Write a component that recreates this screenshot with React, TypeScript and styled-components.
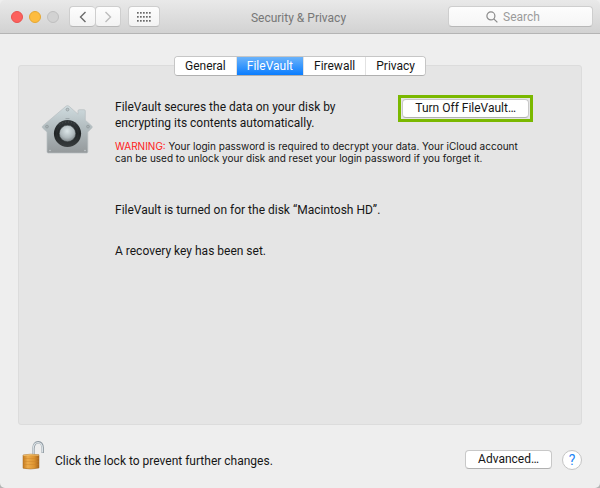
import React from "react";
import styled, { createGlobalStyle } from "styled-components";

const GlobalStyle = createGlobalStyle`
  * { box-sizing: border-box; }
  html, body { margin: 0; background: #b4b4b4; }
  body, button, input {
    font-family: Roboto, "Liberation Sans", sans-serif;
    font-size: 12px;
    color: #161616;
  }
  button { margin: 0; padding: 0; }
  p { margin: 0; }
`;

const Window = styled.div`
  min-height: 100vh;
  display: flex;
  flex-direction: column;
  background: #eeeeee;
  border-radius: 0 0 5px 5px;
`;

const TitleBar = styled.header`
  display: grid;
  grid-template-columns: 1fr auto 1fr;
  align-items: center;
  height: 34px;
  padding: 0 7px 0 11px;
  background: linear-gradient(#e9e9e9, #d2d2d2);
  border-bottom: 1px solid #b4b4b4;
  border-radius: 5px 5px 0 0;
`;

const Title = styled.h1`
  margin: 0;
  padding: 2px 7px 0 0;
  font-size: 12px;
  line-height: 16px;
  font-weight: 400;
  color: #777777;
`;

const BarControls = styled.div`
  display: flex;
  align-items: center;
`;

const Lights = styled.div`
  display: flex;
  gap: 6px;
  margin-right: 10px;
`;

const Light = styled.button<{ $fill: string; $edge: string }>`
  width: 12px;
  height: 12px;
  border-radius: 50%;
  border: 1px solid ${(p) => p.$edge};
  background: ${(p) => p.$fill};
`;

const BarButton = styled.button<{ $wide?: boolean }>`
  display: flex;
  align-items: center;
  justify-content: center;
  width: ${(p) => (p.$wide ? 32 : 26)}px;
  height: 21px;
  margin-left: ${(p) => (p.$wide ? 7 : 0)}px;
  border: 1px solid #cecece;
  border-bottom-color: #b8b8b8;
  border-radius: 4px;
  background: linear-gradient(#fdfdfd, #f3f3f3);
`;

const NavPair = styled.div`
  display: flex;

  button:first-child { border-right: 0; }
`;

const Search = styled.label`
  justify-self: end;
  display: flex;
  align-items: center;
  gap: 5px;
  width: 145px;
  height: 21px;
  padding-left: 37px;
  border: 1px solid #cecece;
  border-bottom-color: #b8b8b8;
  border-radius: 4px;
  background: linear-gradient(#fdfdfd, #f5f5f5);
`;

const SearchInput = styled.input`
  flex: 1;
  min-width: 0;
  padding: 0;
  border: 0;
  outline: 0;
  background: transparent;
  line-height: 16px;

  &::placeholder { color: #9b9b9b; opacity: 1; }
`;

const Main = styled.main`
  flex: 1;
  display: flex;
  flex-direction: column;
  padding: 22px 18px 0;
`;

const Tabs = styled.div`
  position: relative;
  z-index: 1;
  align-self: center;
  display: flex;
  height: 20px;
  margin-bottom: -11px;
  border: 1px solid #c6c6c6;
  border-bottom-color: #b0b0b0;
  border-radius: 4px;
  background: #ffffff;
  overflow: hidden;
`;

const Tab = styled.button<{ $active?: boolean }>`
  padding: 0 10px;
  border: 0;
  border-left: 1px solid #e2e2e2;
  line-height: 18px;
  background: ${(p) => (p.$active ? "linear-gradient(#6bb3fa, #0a7dff)" : "#ffffff")};
  color: ${(p) => (p.$active ? "#ffffff" : "#161616")};

  &:first-child { border-left: 0; }
`;

const Panel = styled.section`
  flex: 1;
  display: flex;
  align-items: flex-start;
  padding: 29px 48px 24px 22px;
  border: 1px solid #dcdcdc;
  border-radius: 3px;
  background: #e5e5e5;
`;

const PanelIcon = styled.div`
  flex: none;
  width: 52px;
  margin: 10px 22px 0 0;

  svg { display: block; }
`;

const Details = styled.div`
  flex: 1;
`;

const Intro = styled.div`
  display: flex;
  justify-content: space-between;
  align-items: flex-start;
`;

const Text = styled.p<{ $gap?: number }>`
  margin-top: ${(p) => p.$gap ?? 0}px;
  line-height: 16px;
`;

const IntroText = styled(Text)`
  max-width: 240px;
  padding-top: 4px;
`;

const Warning = styled.p`
  margin-top: 9px;
  font-family: Inter, sans-serif;
  font-size: 10px;
  line-height: 12px;

  strong { font-weight: 400; color: #ff2020; }
`;

const PushButton = styled.button`
  height: 19px;
  padding: 0 12px;
  border: 1px solid #c8c8c8;
  border-bottom-color: #b0b0b0;
  border-radius: 4px;
  background: #ffffff;
  line-height: 17px;
  white-space: nowrap;
`;

const Highlight = styled.div`
  display: flex;
  padding: 1px;
  border: 3px solid #7ab800;
`;

const Footer = styled.footer`
  display: flex;
  align-items: center;
  height: 63px;
  padding: 0 18px 0 22px;
`;

const LockButton = styled.button`
  width: 22px;
  height: 30px;
  margin: 0 11px 4px 0;
  border: 0;
  background: none;

  svg { display: block; }
`;

const FooterText = styled.p`
  flex: 1;
  padding-top: 8px;
  line-height: 16px;
`;

const FooterActions = styled.div`
  display: flex;
  align-items: center;
  gap: 10px;
  padding-top: 6px;
`;

const HelpButton = styled.button`
  width: 20px;
  height: 20px;
  border: 1px solid #c4c4c4;
  border-radius: 50%;
  background: #ffffff;
  color: #1d86f5;
  font-size: 14px;
  line-height: 18px;
`;

const Chevron = ({ d, color }: { d: string; color: string }) => (
  <svg width="8" height="12" viewBox="0 0 8 12" fill="none" stroke={color} strokeWidth="1.4">
    <path d={d} />
  </svg>
);

const GridIcon = () => (
  <svg width="14" height="10" viewBox="0 0 14 10" fill="#6a6a6a">
    {[0, 4, 8].map((y) =>
      [0, 3, 6, 9, 12].map((x) => <rect key={`${x}-${y}`} x={x} y={y} width="1.7" height="1.7" />)
    )}
  </svg>
);

const SearchIcon = () => (
  <svg width="12" height="12" viewBox="0 0 12 12" fill="none" stroke="#8a8a8a" strokeWidth="1.2">
    <circle cx="4.9" cy="4.9" r="4" />
    <path d="M7.8 7.8 11.4 11.4" />
  </svg>
);

const HouseIcon = () => (
  <svg width="52" height="50" viewBox="0 0 52 50">
    <defs>
      <linearGradient id="wall" x1="0" y1="0" x2="0" y2="1">
        <stop offset="0" stopColor="#d0dcdf" />
        <stop offset="0.5" stopColor="#b0babd" />
        <stop offset="1" stopColor="#94999b" />
      </linearGradient>
      <linearGradient id="ring" x1="0" y1="0" x2="0" y2="1">
        <stop offset="0" stopColor="#33393b" />
        <stop offset="0.5" stopColor="#202425" />
        <stop offset="1" stopColor="#393d3e" />
      </linearGradient>
      <radialGradient id="knob" cx="0.48" cy="0.35" r="0.68">
        <stop offset="0" stopColor="#dce6e8" />
        <stop offset="0.6" stopColor="#b0babd" />
        <stop offset="1" stopColor="#787f82" />
      </radialGradient>
    </defs>
    <path
      d="M25 1.2Q26.5 0 28 1.2L37 9.2V6Q37 4.7 38.3 4.7H43Q44.3 4.7 44.3 6V15.2L50.8 21Q51.8 22 50.8 23L46.8 27V46.8Q46.8 48 45.5 48H7.3Q6 48 6 46.8V27L1.6 23Q.7 22 1.6 21Z"
      fill="url(#wall)"
      stroke="#b7bfc1"
      strokeWidth="0.7"
    />
    <g fill="none" stroke="#8d9598" strokeWidth="0.7">
      <circle cx="26.5" cy="4.6" r="1.4" fill="#bcc6c9" />
      <circle cx="6" cy="21.6" r="1.4" fill="#aab3b6" />
      <circle cx="47" cy="21.6" r="1.4" fill="#aab3b6" />
      <path d="M24.5 13.6H28.5" />
    </g>
    <g fill="#d0d6d8">
      <circle cx="9" cy="45.5" r="0.7" />
      <circle cx="44" cy="45.5" r="0.7" />
    </g>
    <circle cx="26.5" cy="28.5" r="13.6" fill="url(#ring)" />
    <circle cx="26.5" cy="28.5" r="10.8" fill="none" stroke="#33393b" strokeWidth="0.5" />
    <circle cx="26.5" cy="28.5" r="8.2" fill="url(#knob)" stroke="#3d4446" strokeWidth="0.5" />
    <path d="M18.5 19.5Q26.5 14.5 34.5 19.5" fill="none" stroke="#596063" strokeWidth="0.7" strokeDasharray="1 2" />
  </svg>
);

const LockIcon = () => (
  <svg width="22" height="30" viewBox="0 0 22 30">
    <defs>
      <linearGradient id="brass" x1="0" y1="0" x2="1" y2="0">
        <stop offset="0" stopColor="#c57c21" />
        <stop offset="0.3" stopColor="#edac4c" />
        <stop offset="0.7" stopColor="#dc932f" />
        <stop offset="1" stopColor="#a9651a" />
      </linearGradient>
    </defs>
    <path d="M11.4 15V8.5C12 .2 20.7.2 20.7 8V13" fill="none" stroke="#8b969e" strokeWidth="2.4" />
    <path d="M11.2 15V8.5C11.8.8 20.4.8 20.4 8V12.6" fill="none" stroke="#dbe2e6" strokeWidth="1.3" />
    <path d="M1 15Q8.5 13.4 17 14.8V28Q8.5 30 1 28.2Z" fill="url(#brass)" stroke="#a36a27" strokeWidth="0.5" />
    <path d="M1.3 18.5H16.7M1.3 21.5H16.7M1.3 24.5H16.7" stroke="#c98228" strokeWidth="0.4" />
    <path d="M1.3 15.6Q8.5 14 16.7 15.4" fill="none" stroke="#f4c97c" strokeWidth="0.8" />
  </svg>
);

const tabs = ["General", "FileVault", "Firewall", "Privacy"];

export default function App() {
  const [active, setActive] = React.useState("FileVault");
  return (
    <>
      <GlobalStyle />
      <Window>
        <TitleBar>
          <BarControls>
            <Lights>
              <Light $fill="#fc615d" $edge="#e9524f" aria-label="Close" />
              <Light $fill="#fdbc40" $edge="#e5a733" aria-label="Minimize" />
              <Light $fill="#d2d2d2" $edge="#bfbfbf" aria-label="Zoom" disabled />
            </Lights>
            <NavPair>
              <BarButton aria-label="Back">
                <Chevron d="M6.5 1 1.5 6 6.5 11" color="#6a6a6a" />
              </BarButton>
              <BarButton aria-label="Forward" disabled>
                <Chevron d="M1.5 1 6.5 6 1.5 11" color="#bcbcbc" />
              </BarButton>
            </NavPair>
            <BarButton $wide aria-label="Show All">
              <GridIcon />
            </BarButton>
          </BarControls>
          <Title>Security &amp; Privacy</Title>
          <Search>
            <SearchIcon />
            <SearchInput type="search" placeholder="Search" aria-label="Search" />
          </Search>
        </TitleBar>
        <Main>
          <Tabs role="tablist">
            {tabs.map((name) => (
              <Tab
                key={name}
                role="tab"
                aria-selected={name === active}
                $active={name === active}
                onClick={() => setActive(name)}
              >
                {name}
              </Tab>
            ))}
          </Tabs>
          <Panel>
            <PanelIcon>
              <HouseIcon />
            </PanelIcon>
            <Details>
              <Intro>
                <IntroText>
                  FileVault secures the data on your disk by encrypting its contents automatically.
                </IntroText>
                <Highlight>
                  <PushButton>Turn Off FileVault…</PushButton>
                </Highlight>
              </Intro>
              <Warning>
                <strong>WARNING:</strong> Your login password is required to decrypt your data. Your iCloud account
                can be used to unlock your disk and reset your login password if you forget it.
              </Warning>
              <Text $gap={38}>FileVault is turned on for the disk “Macintosh HD”.</Text>
              <Text $gap={25}>A recovery key has been set.</Text>
            </Details>
          </Panel>
        </Main>
        <Footer>
          <LockButton aria-label="Lock">
            <LockIcon />
          </LockButton>
          <FooterText>Click the lock to prevent further changes.</FooterText>
          <FooterActions>
            <PushButton>Advanced…</PushButton>
            <HelpButton aria-label="Help">?</HelpButton>
          </FooterActions>
        </Footer>
      </Window>
    </>
  );
}
